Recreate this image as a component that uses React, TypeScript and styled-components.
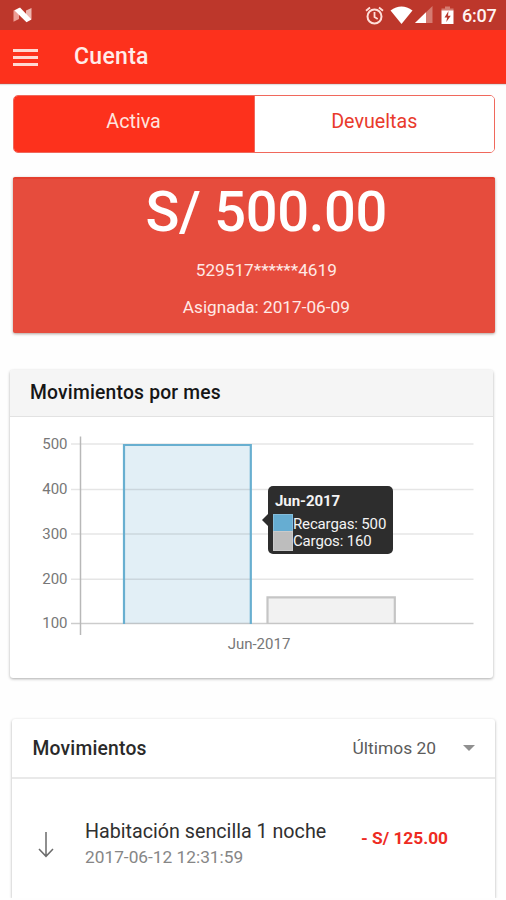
import React from 'react';
import styled, { createGlobalStyle } from 'styled-components';

const GlobalStyle = createGlobalStyle`
  * { box-sizing: border-box; }
  body { margin: 0; background: #fefefe; font-family: Roboto, "Liberation Sans", sans-serif; }
`;

const Screen = styled.div`
  width: 506px;
  height: 900px;
  overflow: hidden;
  background: #fefefe;
`;

const StatusBar = styled.div`
  display: flex;
  align-items: center;
  height: 30px;
  padding: 0 9px 0 12px;
  background: #bd372b;
  color: #fff3f1;
`;

const StatusIcons = styled.div`
  display: flex;
  align-items: center;
  margin-left: auto;
  height: 30px;
`;

const IconGap = styled.span<{ $w: number }>`
  width: ${(p) => p.$w}px;
`;

const Clock = styled.span`
  width: 35px;
  margin-left: 8px;
  padding-top: 2px;
  font-size: 18px;
  font-weight: 500;
  line-height: 30px;
  white-space: nowrap;
  letter-spacing: -0.2px;
`;

const AppBar = styled.header`
  display: flex;
  align-items: center;
  height: 54px;
  padding-left: 13px;
  background: #fd311c;
  border-bottom: 1px solid #e5402f;
  box-shadow: 0 1px 1px rgba(0, 0, 0, 0.12);
`;

const MenuButton = styled.button`
  display: flex;
  flex-direction: column;
  gap: 4px;
  width: 25px;
  margin-top: 2px;
  padding: 0;
  border: 0;
  background: none;
`;

const MenuLine = styled.span`
  height: 3px;
  background: #ffd8d2;
`;

const Title = styled.h1`
  margin: 0 0 0 36px;
  color: #ffece9;
  font-size: 23px;
  font-weight: 500;
  line-height: 54px;
  letter-spacing: 0.3px;
`;

const Segment = styled.div`
  display: flex;
  height: 58px;
  margin: 11px 11px 0 12.6px;
  overflow: hidden;
  border: 1px solid #f0685c;
  border-radius: 5px;
`;

const SegmentButton = styled.button<{ $active?: boolean }>`
  flex: ${(p) => (p.$active ? '0 0 241px' : '1 1 0')};
  padding: 0 0 4px;
  border: 0;
  border-right: ${(p) => (p.$active ? '1px solid #f0685c' : '0')};
  background: ${(p) => (p.$active ? '#fd311c' : '#fff')};
  color: ${(p) => (p.$active ? '#ffe3de' : '#e93a2c')};
  font: 400 19.7px/24px Roboto, sans-serif;
`;

const Balance = styled.section`
  display: flex;
  flex-direction: column;
  align-items: center;
  height: 156px;
  margin: 24px 11px 0 12.6px;
  padding-left: 25px;
  border-top: 2px solid #e43f2e;
  border-radius: 2px;
  background: #e64c3d;
  box-shadow: 0 1px 3px rgba(60, 20, 0, 0.4);
  color: #ffe9e5;
  white-space: nowrap;
`;

const Amount = styled.div`
  height: 66px;
  color: #fff;
  font-size: 56px;
  font-weight: 500;
  line-height: 66px;
  letter-spacing: -0.3px;
`;

const BalanceLine = styled.div`
  margin-top: 17px;
  font-size: 17.2px;
  line-height: 20px;
`;

const CardNumber = styled(BalanceLine)`
  margin-top: 15px;
`;

const Card = styled.section`
  border-radius: 3px;
  background: #fff;
  box-shadow: 0 1px 3px rgba(0, 0, 0, 0.32);
`;

const ChartCard = styled(Card)`
  height: 308px;
  margin: 37px 13px 0 10px;
`;

const ChartHeader = styled.div`
  height: 47px;
  padding-left: 20px;
  border-bottom: 1px solid #e2e2e2;
  border-radius: 3px 3px 0 0;
  background: #f5f5f5;
  color: #161616;
  font-size: 19.3px;
  font-weight: 500;
  line-height: 46px;
  letter-spacing: 0.2px;
`;

const Plot = styled.div`
  position: relative;
  height: 261px;
`;

const PlotSvg = styled.svg`
  display: block;
`;

const AxisText = styled.text`
  fill: #777;
  font: 400 15px Roboto, sans-serif;
`;

const Tooltip = styled.div`
  position: absolute;
  left: 258px;
  top: 69px;
  width: 125px;
  height: 68px;
  padding: 6px 5px;
  border-radius: 5px;
  background: #2d2d2d;
  color: #f4f4f4;
  &::before {
    content: '';
    position: absolute;
    left: -6px;
    top: 28px;
    border: 6px solid transparent;
    border-left: 0;
    border-right-color: #2d2d2d;
  }
`;

const TooltipTitle = styled.div`
  margin-bottom: 3px;
  padding-left: 2px;
  font-size: 15px;
  font-weight: 700;
  line-height: 19px;
  letter-spacing: -0.05px;
`;

const TooltipRow = styled.div<{ $color: string }>`
  display: flex;
  height: 17.3px;
  font-size: 15px;
  line-height: 20px;
  white-space: nowrap;
  letter-spacing: -0.15px;
  &::before {
    content: '';
    flex: none;
    width: 18px;
    height: 17.3px;
    border: 1px solid rgba(255, 255, 255, 0.2);
    background: ${(p) => p.$color};
  }
`;

const ListCard = styled(Card)`
  height: 179px;
  margin: 41px 11px 0 12px;
  border-radius: 3px 3px 0 0;
  clip-path: inset(-4px -4px 0 -4px);
`;

const ListHeader = styled.div`
  display: flex;
  align-items: center;
  height: 60px;
  padding: 0 20px 0 20.5px;
  border-bottom: 2px solid #e9e9e9;
`;

const ListTitle = styled.h2`
  margin: 0;
  color: #2a2a2a;
  font-size: 19.3px;
  font-weight: 500;
  letter-spacing: 0.2px;
`;

const Picker = styled.div`
  display: flex;
  align-items: center;
  gap: 27px;
  margin-left: auto;
  color: #5c5c5c;
  font-size: 17.4px;
`;

const Caret = styled.span`
  border: 6px solid transparent;
  border-top-color: #909090;
  border-bottom: 0;
`;

const Movement = styled.div`
  display: flex;
  align-items: flex-start;
  padding: 40px 0 0 25px;
  white-space: nowrap;
`;

const ArrowBox = styled.span`
  display: flex;
  width: 18px;
  margin: 12px 30px 0 0;
`;

const Description = styled.div`
  width: 276px;
`;

const Name = styled.div`
  color: #303030;
  font-size: 19.7px;
  line-height: 26px;
`;

const DateLine = styled.div`
  color: #868686;
  font-size: 17.3px;
  line-height: 25px;
`;

const Charge = styled.div`
  margin-top: 8px;
  color: #ee2b22;
  font-size: 17.3px;
  font-weight: 700;
  line-height: 22px;
`;

const ticks = [
  { label: '500', y: 27 },
  { label: '400', y: 72.5 },
  { label: '300', y: 117 },
  { label: '200', y: 162.3 },
  { label: '100', y: 206.5 },
];

const NougatMark = () => (
  <svg width="21" height="16" viewBox="0 0 21 16">
    <path d="M1.5 3.5 7 1v11L1.5 14.8z" fill="#ec9d94" />
    <path d="M14 3.5 19.5 1v11L14 14.8z" fill="#eeb5ae" />
    <path d="M2.5 3.5 8 0.5l11.5 12-5 2.8z" fill="#fff" />
  </svg>
);

const AlarmIcon = () => (
  <svg width="19" height="19" viewBox="0 0 19 19" fill="none" stroke="#ffdfda" strokeWidth="2">
    <circle cx="9.5" cy="10.5" r="7" />
    <path d="M1 4.8 5 1.5M18 4.8 14 1.5M9.5 6v5l3.2 2" strokeWidth="1.8" />
  </svg>
);

const WifiIcon = () => (
  <svg width="23" height="19" viewBox="0 0 23 19">
    <path d="M0.5 4.5Q11.5-3.3 22.5 4.5L11.5 18z" fill="#fff" />
  </svg>
);

const SignalIcon = () => (
  <svg width="18" height="18" viewBox="0 0 18 18">
    <path d="M17.5 0v17H0z" fill="#d57b71" />
    <path d="M11 6.3V17H0z" fill="#fff" />
  </svg>
);

const BatteryIcon = () => (
  <svg width="13" height="19" viewBox="0 0 13 19">
    <path d="M0.5 5V2.5h3.5V0.5h5v2h3.5V5z" fill="#d57b71" />
    <path d="M0.5 4.5h12V18h-12z" fill="#fff" />
    <path d="M7.5 5 3.5 11.5h2.6L5.3 16l4.5-6.3H7z" fill="#b8392e" />
  </svg>
);

const DownArrow = () => (
  <svg width="18" height="27" viewBox="0 0 18 27" fill="none" stroke="#6b6b6b" strokeWidth="1.5">
    <path d="M9 1v24.5M2 18l7 7.3 7-7.3" />
  </svg>
);

const BarChart = () => (
  <PlotSvg width="483" height="261">
    {ticks.map((t) => (
      <AxisText key={t.label} x="57.5" y={t.y + 4.8} textAnchor="end">
        {t.label}
      </AxisText>
    ))}
    <rect x="114" y="28" width="126.5" height="178.5" fill="#e2eff6" />
    <rect x="257.5" y="180.5" width="127" height="26" fill="#f2f2f2" />
    {ticks.map((t) => (
      <path
        key={t.label}
        d={`M61 ${t.y}H463.5`}
        stroke="#000"
        strokeOpacity={t.label === '100' ? 0.2 : 0.1}
        strokeWidth="1.4"
      />
    ))}
    <path d="M70.5 19.5V218" stroke="#b8b8b8" strokeWidth="1.5" />
    <path d="M114 207V28H240.8V207" fill="none" stroke="#68afd0" strokeWidth="2.2" />
    <path d="M257.5 207V180.3H384.8V207" fill="none" stroke="#c5c5c5" strokeWidth="2.2" />
    <AxisText x="249" y="232" textAnchor="middle">
      Jun-2017
    </AxisText>
  </PlotSvg>
);

export default function App() {
  return (
    <Screen>
      <GlobalStyle />
      <StatusBar>
        <NougatMark />
        <StatusIcons>
          <AlarmIcon />
          <IconGap $w={6} />
          <WifiIcon />
          <IconGap $w={2} />
          <SignalIcon />
          <IconGap $w={8} />
          <BatteryIcon />
          <Clock>6:07</Clock>
        </StatusIcons>
      </StatusBar>
      <AppBar>
        <MenuButton aria-label="Menú">
          <MenuLine />
          <MenuLine />
          <MenuLine />
        </MenuButton>
        <Title>Cuenta</Title>
      </AppBar>
      <Segment>
        <SegmentButton $active>Activa</SegmentButton>
        <SegmentButton>Devueltas</SegmentButton>
      </Segment>
      <Balance>
        <Amount>S/ 500.00</Amount>
        <CardNumber>529517******4619</CardNumber>
        <BalanceLine>Asignada: 2017-06-09</BalanceLine>
      </Balance>
      <ChartCard>
        <ChartHeader>Movimientos por mes</ChartHeader>
        <Plot>
          <BarChart />
          <Tooltip>
            <TooltipTitle>Jun-2017</TooltipTitle>
            <TooltipRow $color="#66add2">Recargas: 500</TooltipRow>
            <TooltipRow $color="#bdbdbd">Cargos: 160</TooltipRow>
          </Tooltip>
        </Plot>
      </ChartCard>
      <ListCard>
        <ListHeader>
          <ListTitle>Movimientos</ListTitle>
          <Picker>
            Últimos 20
            <Caret />
          </Picker>
        </ListHeader>
        <Movement>
          <ArrowBox>
            <DownArrow />
          </ArrowBox>
          <Description>
            <Name>Habitación sencilla 1 noche</Name>
            <DateLine>2017-06-12 12:31:59</DateLine>
          </Description>
          <Charge>- S/ 125.00</Charge>
        </Movement>
      </ListCard>
    </Screen>
  );
}
